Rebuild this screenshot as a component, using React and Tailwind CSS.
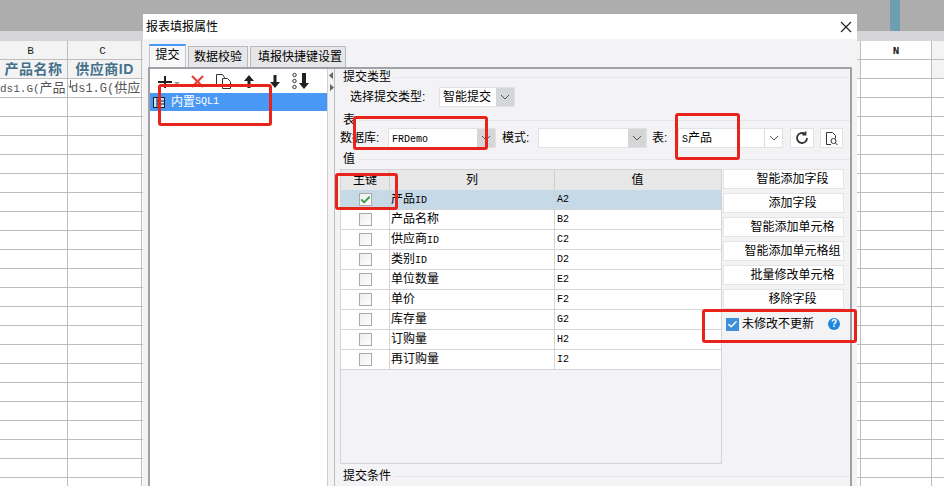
import { Check } from "lucide-react"

const font = { fontFamily: '"Liberation Sans", "Noto Sans CJK SC", sans-serif' }
const mono = { fontFamily: '"Liberation Mono", monospace' }

const gridColumns = ["w-[68px]", "w-[74px]", "w-[718px]", "w-[72px]", "w-[12px]"]
const gridRows = Array.from({ length: 22 })

const fields = [
  ["产品", "ID", "A2", true],
  ["产品名称", "", "B2"],
  ["供应商", "ID", "C2"],
  ["类别", "ID", "D2"],
  ["单位数量", "", "E2"],
  ["单价", "", "F2"],
  ["库存量", "", "G2"],
  ["订购量", "", "H2"],
  ["再订购量", "", "I2"],
]

const actions = ["智能添加字段", "添加字段", "智能添加单元格", "智能添加单元格组", "批量修改单元格", "移除字段"]

const Chevron = () => (
  <svg width="10" height="6" viewBox="0 0 10 6" fill="none" stroke="#555" strokeWidth="1">
    <path d="M1 1l4 4 4-4" />
  </svg>
)

// 영문은 폭이 좁은 고정폭으로
const Latin = ({ children }) => (
  <span className="text-[10px]" style={mono}>{children}</span>
)

// 下拉框
const Select = ({ children, width, gray = true }) => (
  <div className={`${width} h-[20px] flex bg-white border border-[#e2e2e4] shrink-0`}>
    <div className="flex-1 pl-[3px] text-[12px] leading-[18px] text-black whitespace-nowrap overflow-hidden">{children}</div>
    <div className={`w-[18px] flex items-center justify-center ${gray ? "bg-[#d5d6d8]" : "border-l border-[#dcdcdc]"}`}>
      <Chevron />
    </div>
  </div>
)

const SectionTitle = ({ text, className = "" }) => (
  <div className={`flex items-center pl-[8px] ${className}`}>
    <span className="text-[12px] leading-[14px] text-black whitespace-nowrap">{text}</span>
    <div className="flex-1 h-px bg-[#e6e6e8] ml-[3px]" />
  </div>
)

const Toolbar = () => (
  <div className="h-[24px] flex items-center pl-[7px]">
    <svg width="24" height="16" viewBox="0 0 24 16">
      <path d="M1 9h14M8 3v12" stroke="#222" strokeWidth="2" fill="none" />
      <path d="M17 9h6l-3 3z" fill="#999" />
    </svg>
    <svg width="15" height="15" viewBox="0 0 15 15" className="ml-[9px]">
      <path d="M2 2l11 11M13 2L2 13" stroke="#e0443c" strokeWidth="2.200" fill="none" />
    </svg>
    <svg width="17" height="17" viewBox="0 0 17 17" fill="#fff" stroke="#333" strokeWidth="1" className="ml-[10px]">
      <path d="M1.500 1.500h6l2 3v8h-8z" />
      <path d="M7.500 5.500h5l3 3v7h-8z" />
    </svg>
    <svg width="10" height="15" viewBox="0 0 10 15" className="ml-[12px]">
      <path d="M5 1l5 6H6.500v7h-3V7H0z" fill="#222" />
    </svg>
    <svg width="10" height="15" viewBox="0 0 10 15" className="ml-[16px]">
      <path d="M5 14l5-6H6.500V1h-3v7H0z" fill="#222" />
    </svg>
    <svg width="18" height="18" viewBox="0 0 18 18" className="ml-[12px]">
      <circle cx="2.500" cy="3" r="1.700" fill="none" stroke="#333" />
      <circle cx="2.500" cy="9" r="1.700" fill="none" stroke="#333" />
      <circle cx="2.500" cy="15" r="1.700" fill="none" stroke="#333" />
      <path d="M12 17l5-6h-3V1h-4v10H7z" fill="#222" />
    </svg>
  </div>
)

const FieldsTable = () => (
  <div className="w-[382px] h-[295px] border border-[#d4d4d6] shrink-0">
    <div className="h-[20px] flex bg-[#e7e7e8] text-[12px] leading-[20px] text-black text-center">
      <div className="w-[49px] border-r border-[#cfcfcf]">主键</div>
      <div className="w-[165px] border-r border-[#cfcfcf]">列</div>
      <div className="w-[165px]">值</div>
    </div>
    {fields.map(([name, suffix, cell, selected]) => (
      <div
        key={name + suffix}
        className={`h-[20px] flex border-b border-[#d4d4d6] text-[12px] leading-[19px] text-black ${
          selected ? "bg-[#c6d9e7]" : "bg-white"
        }`}
      >
        <div className="w-[49px] flex items-center justify-center border-r border-[#d4d4d6]">
          <div className="w-[13px] h-[13px] border border-[#a9a9a9] bg-gradient-to-br from-[#eeeeee] to-white flex items-center justify-center">
            {selected && <Check size={12} strokeWidth={4} className="text-[#35a043]" />}
          </div>
        </div>
        <div className="w-[165px] pl-[1px] border-r border-[#d4d4d6]">
          {name}
          {suffix && <Latin>{suffix}</Latin>}
        </div>
        <div className="w-[165px] pl-[2px] text-[10px]" style={mono}>{cell}</div>
      </div>
    ))}
  </div>
)

const SidePanel = () => (
  <div className="flex flex-col ml-[1px] w-[121px]">
    <div className="flex flex-col gap-[4px]">
      {actions.map((label) => (
        <div key={label} className="h-[20px] bg-white border border-[#e4e4e6] pl-[18px] text-center text-[12px] leading-[18px] text-black whitespace-nowrap">
          {label}
        </div>
      ))}
    </div>
    <div className="flex items-center mt-[8px] ml-[3px]">
      <div className="w-[13px] h-[13px] bg-[#3d8fdb] flex items-center justify-center">
        <Check size={11} strokeWidth={3} className="text-white" />
      </div>
      <span className="ml-[3px] text-[12px] leading-[14px] text-black whitespace-nowrap">未修改不更新</span>
      <div className="ml-[14px] w-[12px] h-[12px] rounded-full bg-[#1f86dc] text-white text-[10px] leading-[12px] text-center font-bold">?</div>
    </div>
  </div>
)

const RedBox = ({ className }) => <div className={`absolute border-[3px] border-[#e8231b] rounded-[3px] ${className}`} />

const App = () => {
  return (
    <div className="relative w-[944px] h-[486px] overflow-hidden bg-white" style={font}>
      {/* 뒤쪽 스프레드시트 */}
      <div className="relative h-[31px] bg-[#adadad]">
        <div className="absolute left-[890px] top-0 w-[10px] h-[31px] bg-[#6d9fb1]" />
      </div>
      <div className="h-[10px] bg-[#d5d5d8]" />
      <div className="h-[19px] flex bg-[#f3f3f3] border-b border-[#bdbdbd] text-[11px] leading-[20px] text-[#222] text-center" style={mono}>
        <div className={`${gridColumns[0]} border-r border-[#bdbdbd] pr-[6px]`}>B</div>
        <div className={`${gridColumns[1]} border-r border-[#bdbdbd] pr-[4px]`}>C</div>
        <div className={gridColumns[2]} />
        <div className={`${gridColumns[3]} border-x border-[#bdbdbd] font-bold bg-white`}>N</div>
      </div>
      <div className="h-[19px] flex border-b border-[#bdbdbd] bg-[#f3f3f3] text-[14px] leading-[18px] font-bold text-[#44708a] text-center whitespace-nowrap tracking-[0.5px]">
        <div className={`${gridColumns[0]} border-r border-[#bdbdbd]`}>产品名称</div>
        <div className={`${gridColumns[1]} border-r border-[#bdbdbd]`}>供应商ID</div>
        <div className={gridColumns[2]} />
        <div className={`${gridColumns[3]} border-x border-[#bdbdbd] bg-white`} />
      </div>
      <div className="h-[19px] flex border-b border-[#bdbdbd] text-[13px] leading-[18px] text-[#555] whitespace-nowrap">
        <div className={`${gridColumns[0]} border-r border-[#bdbdbd] overflow-hidden`}>
          <span className="text-[11px]" style={mono}>ds1.G(</span>产品
        </div>
        <div className={`${gridColumns[1]} border-r border-[#bdbdbd] pl-[3px] overflow-hidden relative`}>
          <span className="text-[12px]" style={mono}>ds1.G(</span>供应
          <svg width="5" height="9" viewBox="0 0 5 9" fill="none" stroke="#666" strokeWidth="1" className="absolute left-0 top-[1px]">
            <path d="M2.500 0v8M0.500 5.500l2 2.500 2-2.500" />
          </svg>
        </div>
        <div className={gridColumns[2]} />
        <div className={`${gridColumns[3]} border-x border-[#bdbdbd]`} />
      </div>
      {gridRows.map((_, i) => (
        <div key={i} className="h-[19px] flex border-b border-[#bdbdbd]">
          <div className={`${gridColumns[0]} border-r border-[#bdbdbd]`} />
          <div className={`${gridColumns[1]} border-r border-[#bdbdbd]`} />
          <div className={gridColumns[2]} />
          <div className={`${gridColumns[3]} border-x border-[#bdbdbd]`} />
        </div>
      ))}

      {/* 대화상자 */}
      <div className="absolute left-[143px] top-[14px] w-[714px] h-[472px] bg-[#f3f3f5] flex flex-col">
        <div className="h-[25px] bg-white flex items-center justify-between pl-[3px] pr-[5px]">
          <span className="text-[12px] text-black">报表填报属性</span>
          <svg width="12" height="12" viewBox="0 0 12 12" stroke="#222" strokeWidth="1.200" fill="none">
            <path d="M1 1l10 10M11 1L1 11" />
          </svg>
        </div>

        <div className="h-[28px] flex items-end pl-[6px] gap-[2px] text-[12px] text-black">
          <div className="h-[23px] w-[37px] bg-[#f7f7f8] border-t-2 border-x border-t-[#4a98f5] border-x-[#c4c4c6] text-center leading-[19px]">提交</div>
          <div className="h-[21px] w-[60px] bg-[#e6e6e8] border-t border-x border-[#b9b9bc] text-center leading-[20px]">数据校验</div>
          <div className="h-[21px] w-[96px] bg-[#e6e6e8] border-t border-x border-[#b9b9bc] pl-[7px] leading-[20px] whitespace-nowrap">填报快捷键设置</div>
        </div>

        <div className="ml-[5px] w-[704px] flex-1 flex border-2 border-[#9fa1a6] border-b-0 min-h-0">
          {/* 왼쪽 목록 */}
          <div className="w-[177px] bg-white flex flex-col shrink-0">
            <Toolbar />
            <div className="h-[18px] bg-[#4a98f5] flex items-center pl-[2px] text-white whitespace-nowrap">
              <svg width="14" height="13" viewBox="0 0 14 13" fill="none" stroke="#123" strokeWidth="1">
                <rect x="1.500" y="1.500" width="11" height="10" fill="#cfe2f7" />
                <path d="M5 1.500v10M5 5h7.500M5 8h7.500" />
              </svg>
              <span className="ml-[5px] text-[12px] leading-[18px]">内置</span>
              <span className="text-[10px] leading-[18px]" style={mono}>SQL1</span>
            </div>
          </div>

          <div className="w-[7px] border-l border-[#cfcfd1] flex flex-col items-center pt-[3px] gap-[5px] shrink-0">
            <svg width="5" height="7" viewBox="0 0 5 7"><path d="M4 0v7L0 3.500z" fill="#666" /></svg>
            <svg width="5" height="7" viewBox="0 0 5 7"><path d="M1 0v7l4-3.500z" fill="#666" /></svg>
          </div>

          {/* 오른쪽 설정 */}
          <div className="flex-1 min-w-0 border-l border-[#bcbcbe] flex flex-col">
            <SectionTitle text="提交类型" className="mt-[1px]" />
            <div className="h-[22px] mt-[2px] flex items-center pl-[15px]">
              <span className="w-[89px] text-[12px] text-black whitespace-nowrap">选择提交类型:</span>
              <Select width="w-[76px]">智能提交</Select>
            </div>
            <SectionTitle text="表" className="mt-[5px]" />
            <div className="h-[20px] mt-[1px] flex items-center pl-[5px] text-[12px] text-black whitespace-nowrap">
              <span className="w-[48px]">数据库:</span>
              <Select width="w-[108px]"><Latin>FRDemo</Latin></Select>
              <span className="w-[42px] pl-[6px]">模式:</span>
              <Select width="w-[109px]" />
              <span className="w-[31px] pl-[5px]">表:</span>
              <Select width="w-[105px]" gray={false}><Latin>S</Latin>产品</Select>
              <div className="ml-[7px] w-[24px] h-[20px] bg-white border border-[#e2e2e4] flex items-center justify-center">
                <svg width="14" height="14" viewBox="0 0 14 14" fill="none" stroke="#333" strokeWidth="1.800">
                  <path d="M12 7a5 5 0 1 1-2-4" />
                  <path d="M10.500 0.500v3h-3" />
                </svg>
              </div>
              <div className="ml-[6px] w-[23px] h-[20px] bg-white border border-[#e2e2e4] flex items-center justify-center">
                <svg width="14" height="15" viewBox="0 0 14 15" fill="none" stroke="#333" strokeWidth="1">
                  <path d="M6 13.500H1.500v-12h6l3 3v3" />
                  <circle cx="8.500" cy="10" r="2.500" />
                  <path d="M10.500 12l2 2" />
                </svg>
              </div>
            </div>
            <SectionTitle text="值" className="mt-[4px]" />
            <div className="flex pl-[5px] mt-[3px]">
              <FieldsTable />
              <SidePanel />
            </div>
            <SectionTitle text="提交条件" className="mt-[5px]" />
          </div>
        </div>
      </div>

      {/* 빨간 표시 */}
      <RedBox className="left-[158px] top-[84px] w-[114px] h-[42px]" />
      <RedBox className="left-[353px] top-[116px] w-[135px] h-[34px]" />
      <RedBox className="left-[675px] top-[113px] w-[65px] h-[47px]" />
      <RedBox className="left-[335px] top-[173px] w-[63px] h-[37px]" />
      <RedBox className="left-[702px] top-[309px] w-[155px] h-[34px]" />
    </div>
  )
}

export default App
